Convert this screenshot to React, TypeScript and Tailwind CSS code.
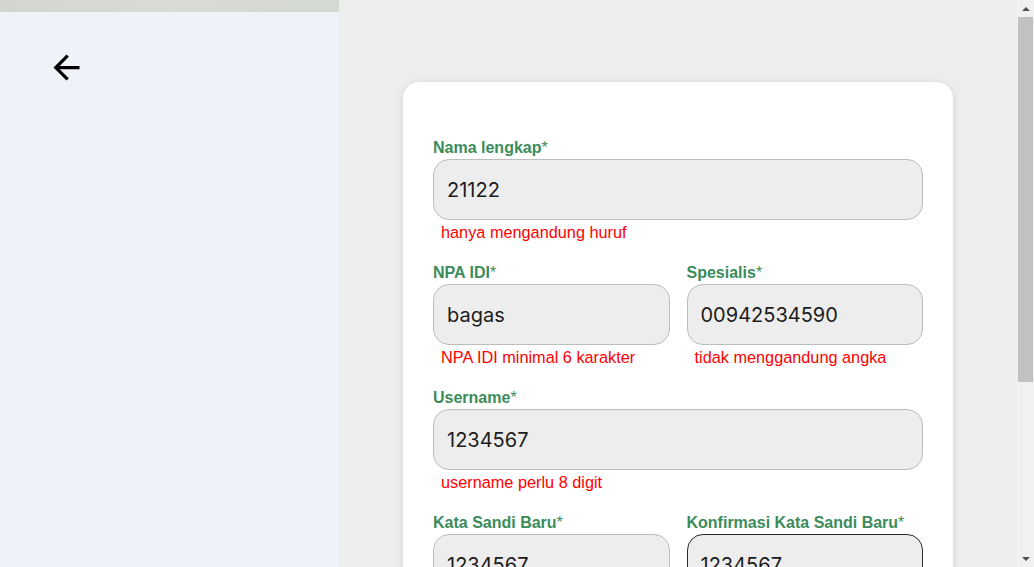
import { MdArrowBack } from "react-icons/md";

type FieldProps = { label: string; value: string; error?: string; focused?: boolean };

function Field({ label, value, error, focused }: FieldProps) {
  return (
    <div className="flex flex-col">
      <label className="text-[16px] font-bold leading-[19px] text-[#3b8c5a]">
        {label}
        <span className="font-normal">*</span>
      </label>
      <div
        className={`mt-[2px] h-[61px] rounded-[16px] bg-[#ededed] border flex items-center px-[13px] ${
          focused ? "border-[#2b2b2b]" : "border-[#bdbdbd]"
        }`}
      >
        <span className="text-[20px] text-[#1c1c1c] font-['Inter',sans-serif]">{value}</span>
      </div>
      <p className="mt-[2px] ml-[8px] h-[21px] text-[16.3px] leading-[21px] text-[#ff0000]">{error}</p>
    </div>
  );
}

export default function App() {
  return (
    <div className="flex h-screen w-full overflow-hidden font-['Liberation_Sans',Arial,sans-serif]">
      {/* left side */}
      <div className="w-[339px] shrink-0 bg-[#eff2f8] flex flex-col">
        <div className="h-[12px] bg-gradient-to-r from-[#d3d5cf] via-[#d9dbd5] to-[#d5d9d3]" />
        <button className="ml-[47px] mt-[36px] w-[39px] h-[39px] text-black">
          <MdArrowBack size={39} />
        </button>
      </div>

      {/* right side */}
      <div className="flex-1 bg-[#ededed] flex justify-center">
        <div className="mt-[82px] w-[550px] h-[760px] shrink-0 bg-white rounded-[16px] shadow-[0_1px_6px_rgba(0,0,0,0.12)] px-[30px] pt-[56px]">
          <div className="flex flex-col gap-[20px]">
            <Field label="Nama lengkap" value="21122" error="hanya mengandung huruf" />
            <div className="grid grid-cols-2 gap-[17px]">
              <Field label="NPA IDI" value="bagas" error="NPA IDI minimal 6 karakter" />
              <Field label="Spesialis" value="00942534590" error="tidak menggandung angka" />
            </div>
            <Field label="Username" value="1234567" error="username perlu 8 digit" />
            <div className="grid grid-cols-2 gap-[17px]">
              <Field label="Kata Sandi Baru" value="1234567" />
              <Field label="Konfirmasi Kata Sandi Baru" value="1234567" focused />
            </div>
          </div>
        </div>
      </div>

      {/* page scrollbar */}
      <div className="w-[17px] shrink-0 bg-[#f1f1f1] flex flex-col items-center">
        <div className="h-[17px] flex items-center justify-center">
          <div className="w-0 h-0 border-l-[4px] border-r-[4px] border-b-[4px] border-l-transparent border-r-transparent border-b-[#505050]" />
        </div>
        <div className="w-[15px] h-[365px] bg-[#c1c1c1]" />
        <div className="flex-1" />
        <div className="h-[17px] flex items-center justify-center">
          <div className="w-0 h-0 border-l-[4px] border-r-[4px] border-t-[4px] border-l-transparent border-r-transparent border-t-[#505050]" />
        </div>
      </div>
    </div>
  );
}
